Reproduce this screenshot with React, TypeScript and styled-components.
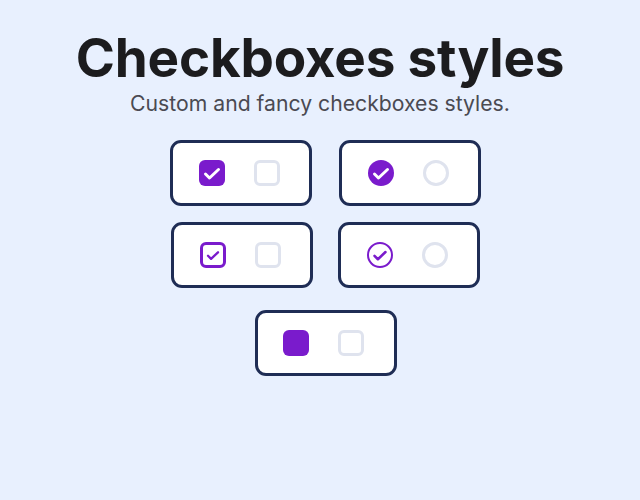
import React from 'react';
import styled, { createGlobalStyle } from 'styled-components';

const PURPLE = '#7a1bcc';
const IDLE = '#dfe3ee';

const GlobalStyle = createGlobalStyle`
  body {
    margin: 0;
    background: #e8f0fe;
    font-family: Inter, 'Noto Sans', sans-serif;
  }
`;

type Variant = 'square' | 'circle' | 'squareOutline' | 'circleOutline' | 'fill';

const Page = styled.main`
  display: flex;
  flex-direction: column;
  align-items: center;
  padding-top: 27px;
`;

const Title = styled.h1`
  margin: 0;
  font-size: 53px;
  line-height: 63px;
  font-weight: 700;
  letter-spacing: -0.2px;
  color: #1c1c1e;
`;

const Subtitle = styled.p`
  margin: 0;
  font-size: 21.2px;
  line-height: 26px;
  color: #4a4a52;
`;

const Board = styled.section`
  display: flex;
  flex-direction: column;
  align-items: center;
  margin-top: 24px;
  padding-left: 11px;
`;

const Row = styled.div<{ $gap: number; $top?: number }>`
  display: flex;
  gap: ${(p) => p.$gap}px;
  margin-top: ${(p) => p.$top ?? 0}px;
`;

const Card = styled.div`
  box-sizing: border-box;
  width: 142px;
  height: 66px;
  background: #fff;
  border: 3px solid #1f2d55;
  border-radius: 11px;
  display: flex;
  align-items: center;
  justify-content: center;
  gap: 29px;
  padding-right: 4px;
`;

const Box = styled.span<{ $round?: boolean; $on?: boolean; $outline?: boolean }>`
  box-sizing: border-box;
  width: 26px;
  height: 26px;
  display: flex;
  align-items: center;
  justify-content: center;
  border-radius: ${(p) => (p.$round ? '50%' : '6px')};
  background: ${(p) => (p.$on && !p.$outline ? PURPLE : '#fff')};
  border: ${(p) =>
    p.$on
      ? p.$outline
        ? `${p.$round ? 2 : 3}px solid ${PURPLE}`
        : 'none'
      : `3px solid ${IDLE}`};
  svg {
    display: block;
  }
`;

function Check({ color, width }: { color: string; width: number }) {
  return (
    <svg width="26" height="26" viewBox="0 0 26 26" fill="none">
      <path
        d="M6.5 14l4 4 9-8.5"
        stroke={color}
        strokeWidth={width}
        strokeLinecap="round"
        strokeLinejoin="round"
      />
    </svg>
  );
}

function CheckPair({ variant }: { variant: Variant }) {
  const round = variant === 'circle' || variant === 'circleOutline';
  const outline = variant === 'squareOutline' || variant === 'circleOutline';
  return (
    <Card>
      <Box $round={round} $on $outline={outline}>
        {variant !== 'fill' && (
          <Check color={outline ? PURPLE : '#fff'} width={outline ? 3 : 3} />
        )}
      </Box>
      <Box $round={round} />
    </Card>
  );
}

export default function App() {
  return (
    <Page>
      <GlobalStyle />
      <Title>Checkboxes styles</Title>
      <Subtitle>Custom and fancy checkboxes styles.</Subtitle>
      <Board>
        <Row $gap={27}>
          <CheckPair variant="square" />
          <CheckPair variant="circle" />
        </Row>
        <Row $gap={25} $top={16}>
          <CheckPair variant="squareOutline" />
          <CheckPair variant="circleOutline" />
        </Row>
        <Row $gap={0} $top={22}>
          <CheckPair variant="fill" />
        </Row>
      </Board>
    </Page>
  );
}
